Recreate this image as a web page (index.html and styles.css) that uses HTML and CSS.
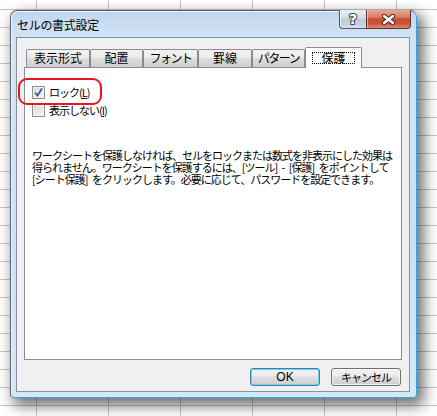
FILE: index.html
```html
<!DOCTYPE html>
<html lang="ja">
<head>
<meta charset="utf-8">
<link rel="stylesheet" href="styles.css">
</head>
<body>
<div class="window">
  <div class="titlebar">
    <span class="title">セルの書式設定</span>
    <div class="caption-btns">
      <div class="cbtn help"><svg width="14" height="16" viewBox="0 0 14 16"><text x="7" y="13" text-anchor="middle" class="qmark">?</text></svg></div>
      <div class="cbtn close"><svg width="15" height="11" viewBox="0 0 15 11"><path d="M3 2 L12 9 M12 2 L3 9" class="xo"/><path d="M3 2 L12 9 M12 2 L3 9" class="xi"/></svg></div>
    </div>
  </div>
  <div class="client">
    <div class="tabs">
      <div class="tab w64">表示形式</div>
      <div class="tab w53">配置</div>
      <div class="tab w55 kana">フォント</div>
      <div class="tab w54">罫線</div>
      <div class="tab w53 kana">パターン</div>
      <div class="tab active"><span class="focus">保護</span></div>
    </div>
    <div class="panel">
      <div class="check-row">
        <span class="cb"><svg width="11" height="11" viewBox="0 0 11 11"><path d="M2 5.5 L4.5 8.5 L9 1.5" class="tick"/></svg></span>
        <span class="label">ロック(<u>L</u>)</span>
      </div>
      <div class="check-row">
        <span class="cb"></span>
        <span class="label">表示しない(<u>I</u>)</span>
      </div>
      <div class="note">
        <div class="line">ワークシートを保護しなければ、セルをロックまたは数式を非表示にした効果は</div>
        <div class="line">得られません。ワークシートを保護するには、[ツール] - [保護] をポイントして</div>
        <div class="line">[シート保護] をクリックします。必要に応じて、パスワードを設定できます。</div>
      </div>
      <div class="highlight"></div>
    </div>
    <div class="buttons">
      <div class="btn default">OK</div>
      <div class="btn">キャンセル</div>
    </div>
  </div>
</div>
</body>
</html>
```
FILE: styles.css
```css
html, body {
  margin: 0;
  padding: 0;
}
body {
  width: 437px;
  height: 416px;
  overflow: hidden;
  background-color: #ffffff;
  background-image:
    linear-gradient(to right, #c4c4c4 1px, transparent 1px),
    linear-gradient(to bottom, #c4c4c4 1px, transparent 1px);
  background-size: 72px 18px, 72px 18px;
  background-position: 36px 0, 0 9px;
  font-family: "Noto Sans CJK JP", sans-serif;
  color: #000;
}
.window {
  margin: 10px 0 0 10px;
  width: 407px;
  height: 388px;
  box-sizing: border-box;
  border: 1px solid;
  border-color: #56626e #2fa8e6 #2fa8e6 #56626e;
  border-radius: 7px 7px 4px 4px;
  background: linear-gradient(to bottom, #bed7ee 0, #d2e4f4 26px, #cde0f1 60%, #d6e7f5 100%);
  box-shadow: inset 1px 1px 0 rgba(255,255,255,0.7), 5px 6px 14px 2px rgba(0,0,0,0.55);
  display: flex;
  flex-direction: column;
  padding: 0 6px 5px 5px;
}
.titlebar {
  height: 26px;
  display: flex;
  align-items: flex-start;
  justify-content: space-between;
}
.title {
  font-size: 12px;
  line-height: 12px;
  margin: 8px 0 0 1px;
  letter-spacing: -0.3px;
}
.caption-btns {
  display: flex;
  margin-top: -1px;
  margin-right: -1px;
}
.cbtn {
  height: 19px;
  box-sizing: border-box;
  display: flex;
  align-items: center;
  justify-content: center;
  border: 1px solid #4e5c6a;
  border-top: none;
}
.help {
  width: 27px;
  border-right: none;
  border-radius: 0 0 0 4px;
  background: linear-gradient(to bottom, #e9eff5 0, #d3dee9 45%, #b9cadb 50%, #c5d4e3 85%, #d8e3ee 100%);
  box-shadow: inset 1px 0 0 rgba(255,255,255,0.6);
}
.close {
  width: 45px;
  border-color: #5c3328;
  border-radius: 0 0 4px 0;
  background: linear-gradient(to bottom, #e9a999 0, #d97c67 40%, #c94a32 50%, #cc5239 75%, #de8a73 100%);
  box-shadow: inset 1px 0 0 rgba(255,220,210,0.6);
}
.qmark {
  font-family: "DejaVu Sans", sans-serif;
  font-weight: bold;
  font-size: 14px;
  fill: #ffffff;
  stroke: #3d4b59;
  stroke-width: 2px;
  paint-order: stroke fill;
}
.xo {
  stroke: #4b2a22;
  stroke-width: 4.4px;
  stroke-linecap: round;
  fill: none;
}
.xi {
  stroke: #ffffff;
  stroke-width: 2.4px;
  stroke-linecap: round;
  fill: none;
}
.client {
  flex: 1;
  border: 1px solid #8493a3;
  background: #f0f0f0;
  padding: 9px 7px 5px 7px;
  display: flex;
  flex-direction: column;
}
.tabs {
  display: flex;
  align-items: flex-end;
  height: 20px;
  margin-left: 2px;
  position: relative;
  z-index: 1;
}
.tab {
  box-sizing: border-box;
  height: 18px;
  border: 1px solid #898c95;
  border-bottom: none;
  border-radius: 2px 2px 0 0;
  background: linear-gradient(to bottom, #f3f3f3 0, #ebebeb 45%, #dddddd 50%, #cfcfcf 100%);
  font-size: 12px;
  line-height: 16px;
  text-align: center;
  white-space: nowrap;
}
.tab.kana { letter-spacing: -1.5px; }
.w64 { width: 64px; }
.w53 { width: 53px; }
.w55 { width: 55px; }
.w54 { width: 54px; }
.tab.active {
  width: 57px;
  height: 21px;
  margin-bottom: -1px;
  background: #ffffff;
  padding-top: 4px;
}
.focus {
  display: inline-block;
  width: 43px;
  height: 12px;
  box-sizing: border-box;
  border: 1px dotted #000;
  font-size: 12px;
  line-height: 9px;
  vertical-align: top;
}
.panel {
  position: relative;
  height: 293px;
  box-sizing: border-box;
  border: 1px solid #898c95;
  background: #ffffff;
  padding: 15px 7px 0 7px;
}
.check-row {
  display: flex;
  align-items: center;
  height: 18px;
  gap: 4px;
}
.cb {
  width: 13px;
  height: 13px;
  box-sizing: border-box;
  border: 1px solid #8e8f8f;
  background: linear-gradient(135deg, #d8d8d8 0, #f6f6f6 100%);
  box-shadow: inset 0 0 0 1px #f4f4f4;
  display: flex;
  align-items: center;
  justify-content: center;
}
.tick {
  stroke: #3c5a9a;
  stroke-width: 1.8px;
  fill: none;
}
.label {
  font-size: 11px;
  letter-spacing: -1px;
  line-height: 14px;
}
.label u { text-underline-offset: 1px; }
.note {
  margin-top: 30px;
  display: flex;
  flex-direction: column;
}
.line {
  height: 12px;
  font-size: 11px;
  line-height: 12px;
  letter-spacing: -1px;
  word-spacing: 3px;
  white-space: nowrap;
}
.highlight {
  position: absolute;
  left: -7px;
  top: 10px;
  width: 84px;
  height: 27px;
  box-sizing: border-box;
  border: 2.5px solid #e8161e;
  border-radius: 9px;
}
.buttons {
  display: flex;
  justify-content: flex-end;
  gap: 11px;
  margin-top: 8px;
  margin-right: 1px;
}
.btn {
  width: 70px;
  height: 18px;
  box-sizing: border-box;
  border: 1px solid #707070;
  border-radius: 3px;
  background: linear-gradient(to bottom, #f2f2f2 0, #ebebeb 45%, #dddddd 50%, #cfcfcf 100%);
  box-shadow: inset 0 0 0 1px rgba(255,255,255,0.7);
  font-size: 11px;
  line-height: 16px;
  text-align: center;
  letter-spacing: -1px;
}
.btn.default {
  border-color: #3c7fb1;
  box-shadow: inset 0 0 0 1px #6fd0f5;
  letter-spacing: 0;
  font-family: "Liberation Sans", sans-serif;
  font-size: 12px;
}
```
